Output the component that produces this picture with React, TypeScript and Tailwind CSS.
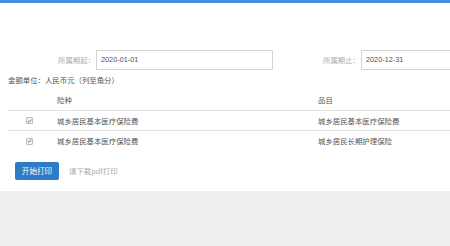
import React from "react";

const rows = [
	{ kind: "城乡居民基本医疗保险费", item: "城乡居民基本医疗保险费" },
	{ kind: "城乡居民基本医疗保险费", item: "城乡居民长期护理保险" },
];

function Check() {
	return (
		<span className="flex h-[7px] w-[7px] items-center justify-center rounded-[1px] border border-[#bdbdbd] bg-[#f2f2f2]">
			<svg viewBox="0 0 8 8" className="h-[6px] w-[6px]">
				<path d="M1.2 4.2 L3.2 6 L6.8 1.8" fill="none" stroke="#555" strokeWidth="1.2" />
			</svg>
		</span>
	);
}

export default function App() {
	return (
		<div className="h-[246px] w-[450px] overflow-hidden bg-[#eeeeee] font-['Noto_Sans_CJK_SC','Liberation_Sans',sans-serif] text-[7.4px] text-[#555]">
			<div className="h-[3px] bg-[#4a8de4] shadow-[0_1px_1px_rgba(74,141,228,0.15)]" />
			<div className="h-[188px] bg-white">
				{/* Date range */}
				<div className="flex items-center whitespace-nowrap pt-[47px]">
					<div className="ml-[58px] flex items-center">
						<span className="w-[38px] text-[#aaa]">所属期起：</span>
						<div className="flex h-[20px] w-[177px] shrink-0 items-center border border-[#d4d4d4] pl-[4px] font-['Liberation_Sans',sans-serif] text-[7.3px] text-[#555]">
							2020-01-01
						</div>
					</div>
					<div className="ml-[50px] flex items-center">
						<span className="w-[38px] text-[#aaa]">所属期止：</span>
						<div className="flex h-[20px] w-[177px] shrink-0 items-center border border-[#d4d4d4] pl-[4px] font-['Liberation_Sans',sans-serif] text-[7.3px] text-[#555]">
							2020-12-31
						</div>
					</div>
				</div>

				<div className="mt-[4px] pl-[8px] leading-[12px]">金额单位：人民币元（列至角分）</div>

				{/* Table */}
				<div className="ml-[8px] mt-[4px] w-[520px]">
					<div className="flex h-[21px] items-center border-b border-[#e2e2e2]">
						<div className="w-[49px]" />
						<div className="w-[261px]">险种</div>
						<div>品目</div>
					</div>
					{rows.map((r, i) => (
						<div
							key={i}
							className={`flex h-[20px] items-center ${i < rows.length - 1 ? "border-b border-[#e2e2e2]" : ""}`}>
							<div className="w-[49px] pl-[18px]">
								<Check />
							</div>
							<div className="w-[261px]">{r.kind}</div>
							<div>{r.item}</div>
						</div>
					))}
				</div>

				<div className="ml-[15px] mt-[11px] flex items-center">
					<button className="h-[18px] w-[44px] rounded-[2px] bg-[#2f7bc5] text-[7.6px] text-white">开始打印</button>
					<span className="ml-[10px] text-[#aaa]">请下载pdf打印</span>
				</div>
			</div>
		</div>
	);
}
